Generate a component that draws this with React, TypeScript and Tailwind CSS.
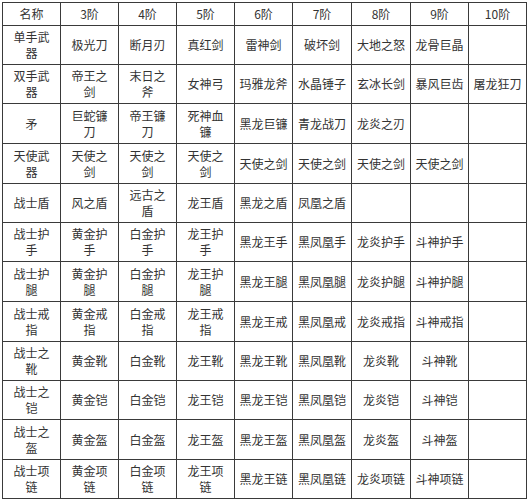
import React from "react";

const HEADERS = ["名称", "3阶", "4阶", "5阶", "6阶", "7阶", "8阶", "9阶", "10阶"];

// "\n" marks where the narrow cells wrap in the original table
const ROWS: string[][] = [
  ["单手武\n器", "极光刀", "断月刃", "真红剑", "雷神剑", "破坏剑", "大地之怒", "龙骨巨晶", ""],
  ["双手武\n器", "帝王之\n剑", "末日之\n斧", "女神弓", "玛雅龙斧", "水晶锤子", "玄冰长剑", "暴风巨齿", "屠龙狂刀"],
  ["矛", "巨蛇镰\n刀", "帝王镰\n刀", "死神血\n镰", "黑龙巨镰", "青龙战刀", "龙炎之刃", "", ""],
  ["天使武\n器", "天使之\n剑", "天使之\n剑", "天使之\n剑", "天使之剑", "天使之剑", "天使之剑", "天使之剑", ""],
  ["战士盾", "风之盾", "远古之\n盾", "龙王盾", "黑龙之盾", "凤凰之盾", "", "", ""],
  ["战士护\n手", "黄金护\n手", "白金护\n手", "龙王护\n手", "黑龙王手", "黑凤凰手", "龙炎护手", "斗神护手", ""],
  ["战士护\n腿", "黄金护\n腿", "白金护\n腿", "龙王护\n腿", "黑龙王腿", "黑凤凰腿", "龙炎护腿", "斗神护腿", ""],
  ["战士戒\n指", "黄金戒\n指", "白金戒\n指", "龙王戒\n指", "黑龙王戒", "黑凤凰戒", "龙炎戒指", "斗神戒指", ""],
  ["战士之\n靴", "黄金靴", "白金靴", "龙王靴", "黑龙王靴", "黑凤凰靴", "龙炎靴", "斗神靴", ""],
  ["战士之\n铠", "黄金铠", "白金铠", "龙王铠", "黑龙王铠", "黑凤凰铠", "龙炎铠", "斗神铠", ""],
  ["战士之\n盔", "黄金盔", "白金盔", "龙王盔", "黑龙王盔", "黑凤凰盔", "龙炎盔", "斗神盔", ""],
  ["战士项\n链", "黄金项\n链", "白金项\n链", "龙王项\n链", "黑龙王链", "黑凤凰链", "龙炎项链", "斗神项链", ""],
];

export default function App() {
  return (
    <div
      className="min-h-[500px] w-[529px] bg-white pl-[2px] pt-[2px] text-[12px] text-[#333]"
      style={{ fontFamily: '"Noto Sans CJK SC", "Noto Sans", sans-serif' }}
    >
      <div className="grid w-fit grid-cols-[57px_57px_57px_57px_57px_58px_58px_57px_57px] grid-rows-[22px_38px_38px_39px_39px_38px_38px_39px_39px_38px_38px_39px_38px] gap-px border border-[#3a3a3a] bg-[#3a3a3a]">
        {HEADERS.map((h) => (
          <div key={h} className="flex items-center justify-center bg-white leading-[16px]">
            {h}
          </div>
        ))}
        {ROWS.map((row, i) =>
          row.map((cell, j) => (
            <div
              key={`${i}-${j}`}
              className="flex items-center justify-center whitespace-pre-line bg-white text-center leading-[16px]"
            >
              {cell}
            </div>
          ))
        )}
      </div>
    </div>
  );
}
